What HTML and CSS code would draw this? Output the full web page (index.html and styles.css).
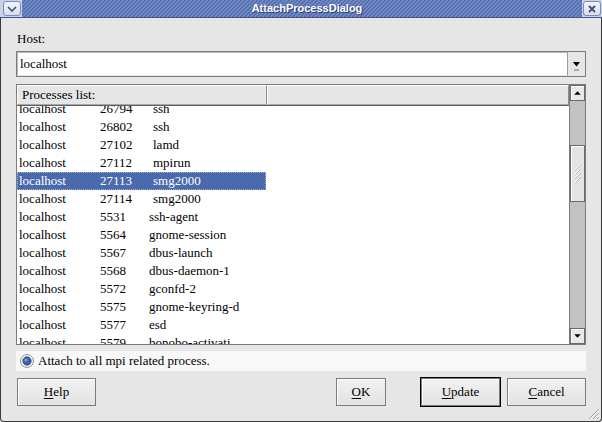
FILE: index.html
```html
<!DOCTYPE html>
<html>
<head>
<meta charset="utf-8">
<title>AttachProcessDialog</title>
<link rel="stylesheet" href="styles.css">
</head>
<body>
<div class="window">
  <div class="titlebar">
    <div class="tbtn menu">
      <div class="tbtn-face">
        <svg width="10" height="6" viewBox="0 0 10 6"><path d="M1 1 L5 5 L9 1" fill="none" stroke="#3f4f78" stroke-width="1.6"/></svg>
      </div>
    </div>
    <div class="title">AttachProcessDialog</div>
    <div class="tbtn close">
      <div class="tbtn-face">
        <svg width="8" height="8" viewBox="0 0 8 8"><path d="M1 1 L7 7 M7 1 L1 7" fill="none" stroke="#3f4f78" stroke-width="1.8"/></svg>
      </div>
    </div>
  </div>
  <div class="frame">
    <div class="label">Host:</div>
    <div class="combo">
      <div class="entry">localhost</div>
      <div class="combo-btn">
        <svg width="17" height="24" viewBox="0 0 17 24"><polygon points="5,10 12,10 8.5,14.5" fill="#000"/><rect x="6" y="17" width="5" height="2" fill="#ababab"/></svg>
      </div>
    </div>
    <div class="list">
      <div class="list-main">
        <div class="header">
          <div class="hcell c1">Processes list:</div>
          <div class="hcell c2"></div>
        </div>
        <div class="viewport">
          <div class="rows">
            <div class="row"><span>localhost</span><span>26794</span><span>ssh</span></div>
            <div class="row"><span>localhost</span><span>26802</span><span>ssh</span></div>
            <div class="row"><span>localhost</span><span>27102</span><span>lamd</span></div>
            <div class="row"><span>localhost</span><span>27112</span><span>mpirun</span></div>
            <div class="row selected"><span>localhost</span><span>27113</span><span>smg2000</span></div>
            <div class="row"><span>localhost</span><span>27114</span><span>smg2000</span></div>
            <div class="row short"><span>localhost</span><span>5531</span><span>ssh-agent</span></div>
            <div class="row short"><span>localhost</span><span>5564</span><span>gnome-session</span></div>
            <div class="row short"><span>localhost</span><span>5567</span><span>dbus-launch</span></div>
            <div class="row short"><span>localhost</span><span>5568</span><span>dbus-daemon-1</span></div>
            <div class="row short"><span>localhost</span><span>5572</span><span>gconfd-2</span></div>
            <div class="row short"><span>localhost</span><span>5575</span><span>gnome-keyring-d</span></div>
            <div class="row short"><span>localhost</span><span>5577</span><span>esd</span></div>
            <div class="row short"><span>localhost</span><span>5579</span><span>bonobo-activati</span></div>
          </div>
        </div>
      </div>
      <div class="scrollbar">
        <div class="sb-btn">
          <svg width="14" height="14" viewBox="0 0 14 14"><polygon points="7,5 10.5,9 3.5,9" fill="#000"/></svg>
        </div>
        <div class="trough">
          <div class="thumb">
            <svg width="13" height="55" viewBox="0 0 13 55"><path d="M3 25 L9 19 M3 29 L9 23 M3 33 L9 27 M3 37 L9 31" fill="none" stroke="#ffffff" stroke-width="1"/><path d="M4 25 L10 19 M4 29 L10 23 M4 33 L10 27 M4 37 L10 31" fill="none" stroke="#a8a8a8" stroke-width="0.8"/></svg>
          </div>
        </div>
        <div class="sb-btn">
          <svg width="14" height="14" viewBox="0 0 14 14"><polygon points="3.5,5 10.5,5 7,9" fill="#000"/></svg>
        </div>
      </div>
    </div>
    <div class="radio-row">
      <svg class="radio" width="14" height="14" viewBox="0 0 14 14">
        <circle cx="7" cy="7" r="6.4" fill="#ffffff" stroke="#8a8a8a" stroke-width="1"/>
        <circle cx="7" cy="7" r="4.2" fill="#3d5fa9" stroke="#2a4682" stroke-width="0.8"/>
        <circle cx="6" cy="6" r="1.6" fill="#7e9ad2"/>
      </svg>
      <span>Attach to all mpi related process.</span>
    </div>
    <div class="buttons">
      <div class="btn help"><span><u>H</u>elp</span></div>
      <div class="spacer"></div>
      <div class="btn ok"><span><u>O</u>K</span></div>
      <div class="btn update"><span><u>U</u>pdate</span></div>
      <div class="btn cancel"><span><u>C</u>ancel</span></div>
    </div>
    <svg class="grip" width="14" height="14" viewBox="0 0 14 14">
      <path d="M13 3 L3 13 M13 7 L7 13 M13 11 L11 13" fill="none" stroke="#9a9a9a" stroke-width="1"/>
      <path d="M13 4 L4 13 M13 8 L8 13 M13 12 L12 13" fill="none" stroke="#ffffff" stroke-width="1"/>
    </svg>
  </div>
</div>
</body>
</html>
```

FILE: styles.css
```css
* {
  box-sizing: border-box;
  margin: 0;
  padding: 0;
}

body {
  margin: 0;
  width: 602px;
  height: 422px;
  overflow: hidden;
  background: #e6e6e6;
  font-family: "Liberation Serif", "Times New Roman", serif;
  font-size: 13px;
  color: #000;
}

.window {
  width: 602px;
  height: 422px;
  display: flex;
  flex-direction: column;
}

/* ---------- title bar ---------- */
.titlebar {
  flex: none;
  height: 18px;
  display: flex;
  align-items: stretch;
  background: repeating-linear-gradient(135deg, #5670b0 0 1.5px, #7088c4 1.5px 2.83px);
  border-bottom: 1px solid #3f5692;
}

.tbtn {
  flex: none;
  width: 22px;
  display: flex;
  align-items: center;
  justify-content: center;
  background: #c9d2e6;
}

.tbtn.menu {
  padding-left: 1px;
}

.tbtn.close {
  width: 20px;
  padding-right: 1px;
}

.tbtn-face {
  width: 18px;
  height: 15px;
  border: 1px solid #7c8cb6;
  border-radius: 3px;
  background: linear-gradient(#f3f5fa, #d6ddec);
  display: flex;
  align-items: center;
  justify-content: center;
}

.title {
  flex: 1;
  text-align: center;
  padding-left: 10px;
  font-family: "Liberation Sans", Arial, sans-serif;
  font-weight: bold;
  font-size: 11px;
  line-height: 17px;
  color: #ffffff;
  text-shadow: 1px 1px 0 #2c3d6e;
}

/* ---------- frame ---------- */
.frame {
  flex: 1;
  position: relative;
  display: flex;
  flex-direction: column;
  padding: 13px 15px 0 15px;
  border: 1px solid #3a3a3a;
  border-top: none;
  border-radius: 0 0 4px 4px;
  background: #e6e6e6;
}

.label {
  height: 16px;
  line-height: 16px;
  padding-left: 1px;
}

/* ---------- combo ---------- */
.combo {
  margin-top: 4px;
  height: 26px;
  display: flex;
  border: 1px solid #7b7b7b;
  background: #e6e6e6;
}

.entry {
  flex: 1;
  background: #ffffff;
  border-top: 1px solid #b9b9b9;
  border-left: 1px solid #b9b9b9;
  border-right: 1px solid #9c9c9c;
  border-bottom: 1px solid #e8e8e8;
  padding-left: 2px;
  line-height: 22px;
}

.combo-btn {
  width: 17px;
  flex: none;
  display: flex;
}

/* ---------- list ---------- */
.list {
  margin-top: 7px;
  height: 261px;
  display: flex;
  border: 1px solid #7b7b7b;
  background: #ffffff;
}

.list-main {
  flex: 1;
  min-width: 0;
  display: flex;
  flex-direction: column;
}

.header {
  flex: none;
  height: 21px;
  display: flex;
  background: #e6e6e6;
  border-bottom: 1px solid #5e5e5e;
}

.hcell {
  height: 20px;
  line-height: 18px;
  border-top: 1px solid #ffffff;
  border-left: 1px solid #ffffff;
  border-right: 1px solid #8c8c8c;
  border-bottom: 1px solid #a8a8a8;
  padding-left: 4px;
}

.hcell.c1 {
  width: 250px;
  flex: none;
}

.hcell.c2 {
  flex: 1;
}

.viewport {
  flex: 1;
  overflow: hidden;
}

.rows {
  margin-top: -6px;
}

.row {
  width: 249px;
  height: 18px;
  line-height: 18px;
  padding-left: 2px;
  display: grid;
  grid-template-columns: 81px 53px auto;
  white-space: nowrap;
}

.row.short {
  grid-template-columns: 81px 49px auto;
}

.row.selected {
  background: #4b69ad;
  color: #ffffff;
  outline: 1px dotted #9fb2dd;
  outline-offset: -1px;
}

/* ---------- scrollbar ---------- */
.scrollbar {
  width: 16px;
  flex: none;
  display: flex;
  flex-direction: column;
  background: #c2c2c2;
  border-left: 1px solid #7b7b7b;
}

.sb-btn {
  flex: none;
  height: 16px;
  border: 1px solid #6a6a6a;
  background: #e8e8e8;
  box-shadow: inset 1px 1px 0 #ffffff;
  display: flex;
}

.trough {
  flex: 1;
}

.thumb {
  margin-top: 44px;
  height: 57px;
  border: 1px solid #6a6a6a;
  background: #e4e4e4;
  box-shadow: inset 1px 1px 0 #ffffff;
  display: flex;
}

/* ---------- radio ---------- */
.radio-row {
  margin-top: 6px;
  height: 20px;
  display: flex;
  align-items: center;
  gap: 4px;
  padding-left: 4px;
  background: #f8f8f8;
  line-height: 20px;
}

.radio {
  flex: none;
}

/* ---------- buttons ---------- */
.buttons {
  margin-top: 7px;
  height: 28px;
  display: flex;
  padding-left: 1px;
}

.spacer {
  flex: 1;
}

.btn {
  flex: none;
  height: 28px;
  border: 1px solid #7b7b7b;
  background: linear-gradient(#f1f1f1, #e3e3e3);
  box-shadow: inset 1px 1px 0 #ffffff;
  display: flex;
  align-items: center;
  justify-content: center;
}

.btn u {
  text-decoration: underline;
  text-underline-offset: 2px;
}

.btn.help {
  width: 79px;
}

.btn.ok {
  width: 50px;
}

.btn.update {
  width: 79px;
  margin-left: 35px;
  box-shadow: 0 0 0 1px #000000, inset 1px 1px 0 #ffffff;
}

.btn.cancel {
  width: 79px;
  margin-left: 7px;
}

.grip {
  position: absolute;
  right: 1px;
  bottom: 1px;
}
```
